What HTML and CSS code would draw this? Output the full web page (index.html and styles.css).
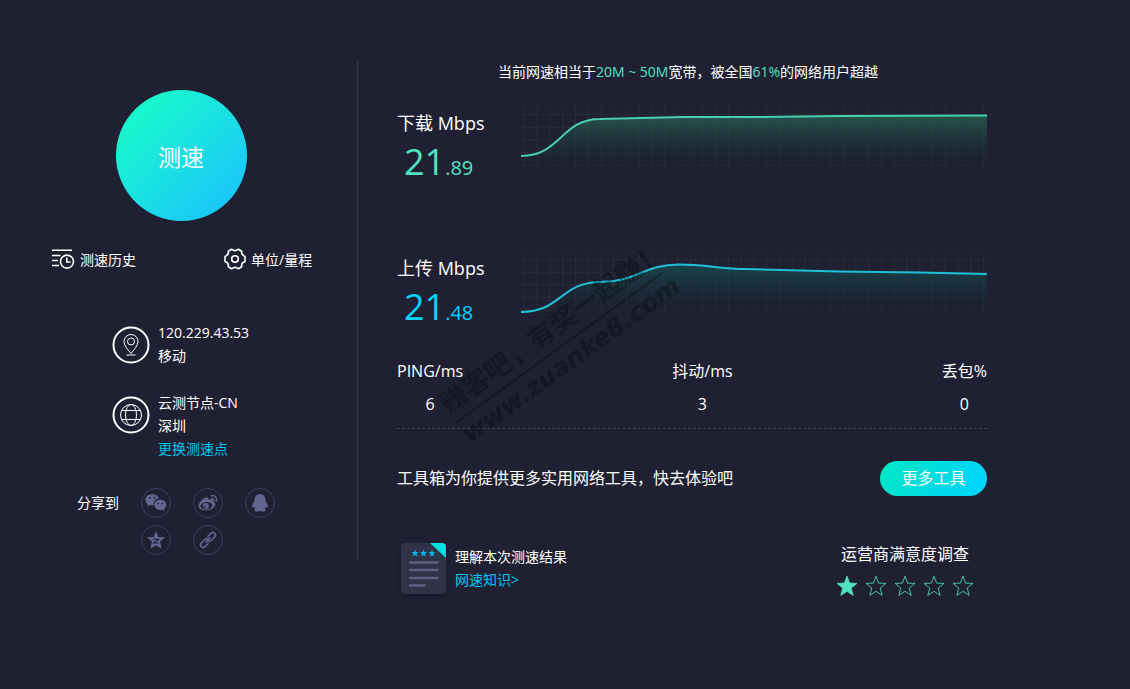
FILE: index.html
```html
<!DOCTYPE html>
<html lang="zh-CN">
<head>
<meta charset="utf-8">
<meta name="viewport" content="width=device-width, initial-scale=1">
<title>测速</title>
<link rel="stylesheet" href="styles.css">
</head>
<body>
<svg class="defs" aria-hidden="true">
  <defs>
    <linearGradient id="fill-down" x1="0" y1="0" x2="0" y2="1">
      <stop offset="0" stop-color="#2c7d60" stop-opacity=".55"/>
      <stop offset=".65" stop-color="#16303a" stop-opacity=".4"/>
      <stop offset="1" stop-color="#1a1c2e" stop-opacity=".3"/>
    </linearGradient>
    <linearGradient id="fill-up" x1="0" y1="0" x2="0" y2="1">
      <stop offset="0" stop-color="#106060" stop-opacity=".55"/>
      <stop offset=".65" stop-color="#142c36" stop-opacity=".4"/>
      <stop offset="1" stop-color="#1a1c2e" stop-opacity=".3"/>
    </linearGradient>
    <pattern id="grid" x="5" y="6" width="12.75" height="12.75" patternUnits="userSpaceOnUse">
      <path d="M.5 0V12.75M0 .5H12.75" stroke="#2a2c33" fill="none"/>
    </pattern>
    <symbol id="star" viewBox="0 0 22 22">
      <path d="M11 1.2 13.6 8.1 21 8.4 15.2 13 17.2 20.4 11 16.3 4.8 20.4 6.8 13 1 8.4 8.4 8.1Z"/>
    </symbol>
  </defs>
</svg>
<main class="page">
  <section class="side">
    <button class="start" type="button">测速</button>
    <nav class="menu">
      <a class="menu-link" href="#history">
        <svg class="menu-icon" viewBox="0 0 24 24"><path d="M0 3.3H20M0 8.5H8.5M0 13.5H6M0 18.5H7M14.8 10.5V15H18.5"/><circle cx="15" cy="14.6" r="6.5"/></svg>
        <span>测速历史</span>
      </a>
      <a class="menu-link" href="#units">
        <svg class="menu-icon" viewBox="0 0 24 24"><path d="M8.600 2.200Q12 5 15.400 2.200L18.700 4.200Q17.900 8 22 9.400V14.600Q17.900 16 18.700 19.800L15.400 21.800Q12 19 8.600 21.800L5.300 19.800Q6.100 16 2 14.600V9.400Q6.100 8 5.300 4.200Z" stroke-linejoin="round"/><circle cx="12" cy="12" r="3.3"/></svg>
        <span>单位/量程</span>
      </a>
    </nav>
    <div class="places">
      <div class="place">
        <svg class="place-icon" viewBox="0 0 38 38"><circle class="ring" cx="19" cy="19" r="17.5"/><path d="M19 27.5C15.500 23.500 12 19 12 15.500A7 7 0 0 1 26 15.500C26 19 22.500 23.500 19 27.500ZM14.500 29H23.500"/><circle cx="19" cy="15.500" r="3.500"/></svg>
        <div><div>120.229.43.53</div><div>移动</div></div>
      </div>
      <div class="place">
        <svg class="place-icon" viewBox="0 0 38 38"><circle class="ring" cx="19" cy="19" r="17.5"/><circle cx="19" cy="19" r="10.500"/><ellipse cx="19" cy="19" rx="5.500" ry="10.500"/><path d="M9.500 14.500H28.500M9.500 23.500H28.500"/></svg>
        <div><div>云测节点-CN</div><div>深圳</div><a class="accent-link" href="#node">更换测速点</a></div>
      </div>
    </div>
    <div class="share">
      <span class="share-label">分享到</span>
      <div class="share-list">
        <button class="share-btn" type="button" aria-label="微信"><svg viewBox="0 0 30 30"><path d="M11 5.500C6.800 5.500 3.600 8.100 3.600 11.500C3.600 13.400 4.600 15 6.200 16.100L5.700 18.600L8.500 17.200Q10.400 17.900 12.600 17.500C11.700 12.900 15.100 10.200 18.500 10.300C17.700 7.400 14.800 5.500 11 5.500Z"/><path d="M19.500 11.500C15.900 11.500 13.200 13.900 13.200 17C13.200 20.500 16.900 23.300 21.400 22.200L24 23.700L23.500 21.300C25.100 20.200 26.100 18.800 26.100 17C26.100 13.900 23.100 11.500 19.500 11.500Z"/><g class="cut"><circle cx="8.500" cy="9.500" r="1"/><circle cx="13.500" cy="9.500" r="1"/><circle cx="17.300" cy="15.500" r=".9"/><circle cx="21.800" cy="15.500" r=".9"/></g></svg></button>
        <button class="share-btn" type="button" aria-label="微博"><svg viewBox="0 0 30 30"><path d="M12.300 9.400C14.500 8.500 16 9.200 15.400 11.500C18.500 10.400 21 10.900 20.300 13.500C22.700 14.200 23.500 16 22.300 18.500C19.500 24 7 24.600 5 19.200C4 16 8.500 10.800 12.300 9.400Z"/><ellipse class="cut" cx="13.300" cy="18" rx="6.300" ry="4" transform="rotate(-10 13 18)"/><circle cx="12.800" cy="18.300" r="3.200"/><circle class="cut" cx="11.600" cy="19" r="1"/><path class="line" d="M17.800 7.500C22.300 6 25.300 9.500 23.800 13.700M18.500 10.400C20.700 9.800 21.700 11.300 21.200 13"/></svg></button>
        <button class="share-btn" type="button" aria-label="QQ"><svg viewBox="0 0 30 30"><path d="M15 5.300C11.500 5.300 9.200 7.900 9.200 11.700C9 13.200 8 14.200 7 16.500C6 18.800 6.500 20.600 8.700 19.200Q9.200 20.500 10.200 21.400C8.100 22.200 8.500 24 10.500 24.200C12.300 24.500 14 24.200 15 23.400C16 24.200 17.700 24.500 19.500 24.200C21.500 24 21.900 22.200 19.800 21.400Q20.800 20.500 21.300 19.200C23.500 20.600 24 18.800 23 16.500C22 14.200 21 13.200 20.800 11.700C20.800 7.900 18.500 5.300 15 5.300Z"/></svg></button>
        <button class="share-btn" type="button" aria-label="QQ空间"><svg viewBox="0 0 30 30"><path d="M15 5.600 17.500 11.700 24.600 12.200 19.300 16.700 21 24.500 15 20.600 9 24.500 10.700 16.700 5.400 12.200 12.500 11.700Z"/><path class="cut-line" d="M11.500 14.300H17.800L12.300 18.300H18"/></svg></button>
        <button class="share-btn" type="button" aria-label="复制链接"><svg viewBox="0 0 30 30"><g class="link" transform="rotate(-45 15 15)"><path d="M13 17.800H7.500Q5 17.800 5 15T7.500 12.200H13Q15 12.200 15.500 14M17 12.200H22.500Q25 12.200 25 15T22.500 17.800H17Q15 17.800 14.500 16M11 15H19"/></g></svg></button>
      </div>
    </div>
  </section>

  <section class="result">
    <p class="summary">当前网速相当于<b>20M ~ 50M</b>宽带，被全国<b>61%</b>的网络用户超越</p>
    <div class="speed">
      <div class="reading">
        <h2>下载 Mbps</h2>
        <p class="value value-down">21<small>.89</small></p>
      </div>
      <svg class="chart" viewBox="0 0 468 60" preserveAspectRatio="none">
        <rect class="grid" width="468" height="60"/>
        <path class="fill-down" d="M2 48C42 48 42 11 81 11L163 9H241L321 8L468 7.500V60H2Z"/>
        <path class="curve curve-down" d="M2 48C42 48 42 11 81 11L163 9H241L321 8L468 7.500"/>
      </svg>
    </div>
    <div class="speed">
      <div class="reading">
        <h2>上传 Mbps</h2>
        <p class="value value-up">21<small>.48</small></p>
      </div>
      <svg class="chart" viewBox="0 0 468 60" preserveAspectRatio="none">
        <rect class="grid" width="468" height="60"/>
        <path class="fill-up" d="M2 59C42 59 42 29 81 29C118 29 124 11.500 160 11.500C185 11.500 205 16 226 16L321 18.500L400 19.500L468 21V60H2Z"/>
        <path class="curve curve-up" d="M2 59C42 59 42 29 81 29C118 29 124 11.500 160 11.500C185 11.500 205 16 226 16L321 18.500L400 19.500L468 21"/>
      </svg>
    </div>
    <dl class="metrics">
      <div><dt>PING/ms</dt><dd>6</dd></div>
      <div><dt>抖动/ms</dt><dd>3</dd></div>
      <div><dt>丢包%</dt><dd>0</dd></div>
    </dl>
    <div class="tools">
      <p>工具箱为你提供更多实用网络工具，快去体验吧</p>
      <button class="more" type="button">更多工具</button>
    </div>
    <div class="footer">
      <div class="learn">
        <svg class="doc" viewBox="0 0 46 52">
          <rect x="0" y="0" width="45" height="51" rx="4" fill="#303248"/>
          <path d="M29 0H41Q45 0 45 4V15Z" fill="#00e0e0"/>
          <g fill="#00b8e6"><use href="#star" x="10" y="6" width="8" height="8"/><use href="#star" x="18.500" y="6" width="8" height="8"/><use href="#star" x="27" y="6" width="8" height="8"/></g>
          <path d="M8 19.500H37.500M8 27H37.500M8 35H37.500M8 42.500H24.500" stroke="#5c5f7e" stroke-width="2.500"/>
        </svg>
        <div class="learn-text"><p>理解本次测速结果</p><a class="accent-link" href="#knowledge">网速知识&gt;</a></div>
      </div>
      <fieldset class="survey">
        <legend>运营商满意度调查</legend>
        <div class="stars">
          <label class="rate"><input type="radio" name="rate" aria-label="1星" checked><svg><use href="#star"/></svg></label>
          <label class="rate"><input type="radio" name="rate" aria-label="2星"><svg><use href="#star"/></svg></label>
          <label class="rate"><input type="radio" name="rate" aria-label="3星"><svg><use href="#star"/></svg></label>
          <label class="rate"><input type="radio" name="rate" aria-label="4星"><svg><use href="#star"/></svg></label>
          <label class="rate"><input type="radio" name="rate" aria-label="5星"><svg><use href="#star"/></svg></label>
        </div>
      </fieldset>
    </div>
    <div class="watermark">
      <div class="watermark-title">赚客吧，有奖一起赚！</div>
      <div class="watermark-site">www.zuanke8.com</div>
    </div>
  </section>
</main>
</body>
</html>
```
FILE: styles.css
```css
* { box-sizing: border-box; }

body {
  margin: 0;
  background: #1f2133;
  color: #fff;
  font: 14px/23px "Open Sans", "Noto Sans CJK SC", sans-serif;
}

p, h2, dl, dd { margin: 0; }
a { color: inherit; text-decoration: none; }
button { font: inherit; color: inherit; border: 0; padding: 0; cursor: pointer; }
.defs { position: absolute; width: 0; height: 0; }

.page {
  display: grid;
  grid-template-columns: 358px minmax(0, 1fr);
  align-items: start;
  padding: 60px 143px 60px 0;
}

.side {
  margin-top: 1px;
  padding: 29px 47px 6px 52px;
  border-right: 1px solid #36384a;
}

.start {
  display: block;
  width: 131px;
  height: 131px;
  margin: 0 auto;
  padding-top: 4px;
  border-radius: 50%;
  background: linear-gradient(135deg, #19ffc6 5%, #1bc1ff 95%);
  font-size: 23px;
}

.menu { display: flex; gap: 87px; margin-top: 26px; }
.menu-link { display: flex; align-items: center; gap: 4px; white-space: nowrap; }
.menu-icon { width: 24px; height: 24px; fill: none; stroke: #fff; stroke-width: 1.6; }

.places {
  display: grid;
  gap: 24px;
  margin: 50px 0 0 60px;
}
.place { display: flex; align-items: flex-start; gap: 8px; }
.place-icon { width: 38px; height: 38px; margin-top: 5px; fill: none; stroke: #fff; stroke-width: 1; }
.ring { stroke-width: 2; }
.accent-link { color: #00c6f0; }

.share { display: flex; gap: 22px; margin: 28px 0 0 25px; }
.share-label { line-height: 30px; white-space: nowrap; }
.share-list { display: grid; grid-template-columns: repeat(3, 30px); gap: 7px 22px; }
.share-btn {
  width: 30px;
  height: 30px;
  border: 1px solid #3d3f61;
  border-radius: 50%;
  background: none;
}
.share-btn svg { display: block; width: 28px; height: 28px; fill: #62668f; }
.share-btn .cut { fill: #1f2133; }
.share-btn .line { fill: none; stroke: #62668f; stroke-width: 1.5; }
.share-btn .cut-line { fill: none; stroke: #1f2133; stroke-width: 1.1; }
.share-btn .link { fill: none; stroke: #62668f; stroke-width: 1.8; }

.result { position: relative; padding-left: 39px; }

.summary { padding-right: 8px; text-align: center; }
.summary b { font-weight: 400; color: #50e3c2; }

.speed {
  display: grid;
  grid-template-columns: 122px minmax(0, 1fr);
  height: 72px;
  margin-top: 25px;
}
.speed + .speed { margin-top: 73px; }
.reading h2 { font-size: 18px; font-weight: 400; line-height: 30px; }
.value { padding-left: 7px; font-size: 36px; line-height: 48px; }
.value small { font-size: 20px; }
.value-down { color: #50e3c2; }
.value-up { color: #00d2ff; }

.chart { width: 100%; height: 60px; }
.fill-down { fill: url(#fill-down); }
.fill-up { fill: url(#fill-up); }
.grid { fill: url(#grid); }
.curve { fill: none; stroke-width: 2; }
.curve-down { stroke: #48cfb1; }
.curve-up { stroke: #1fbfd6; }

.metrics {
  display: flex;
  justify-content: space-between;
  margin-top: 30px;
  padding-bottom: 7px;
  border-bottom: 1px dashed #424455;
  font-size: 16px;
  line-height: 33px;
  text-align: center;
}

.tools {
  display: flex;
  justify-content: space-between;
  align-items: center;
  margin-top: 32px;
  font-size: 16px;
}
.more {
  width: 107px;
  height: 35px;
  border-radius: 18px;
  background: linear-gradient(120deg, #00e8c4, #00d2ff);
}

.footer { display: flex; justify-content: space-between; margin-top: 47px; }
.learn { display: flex; gap: 8px; padding-left: 4px; }
.doc { width: 46px; height: 52px; filter: drop-shadow(0 2px 2px #141624); }
.learn-text { padding-top: 2px; }

.survey { margin: 0 13px 0 0; padding: 0; border: 0; font-size: 16px; text-align: center; }
.survey legend { padding: 0; margin: 0 auto; }
.stars { display: flex; gap: 7px; margin-top: 9px; }
.rate { display: block; position: relative; width: 22px; height: 22px; }
.rate input { appearance: none; position: absolute; inset: 0; margin: 0; cursor: pointer; }
.rate svg { display: block; width: 22px; height: 22px; fill: none; stroke: #50e3c2; stroke-width: 1; stroke-opacity: .8; }
.rate input:checked + svg { fill: #50e3c2; }

.watermark {
  position: absolute;
  left: 70px;
  top: 246px;
  width: 256px;
  color: #000;
  opacity: .28;
  transform: rotate(-36deg);
  pointer-events: none;
  white-space: nowrap;
}
.watermark-title {
  border-bottom: 2px solid;
  font: bold 27px/42px "Noto Sans CJK SC", sans-serif;
}
.watermark-site { font: italic bold 25px/32px "DejaVu Sans", sans-serif; }
```
